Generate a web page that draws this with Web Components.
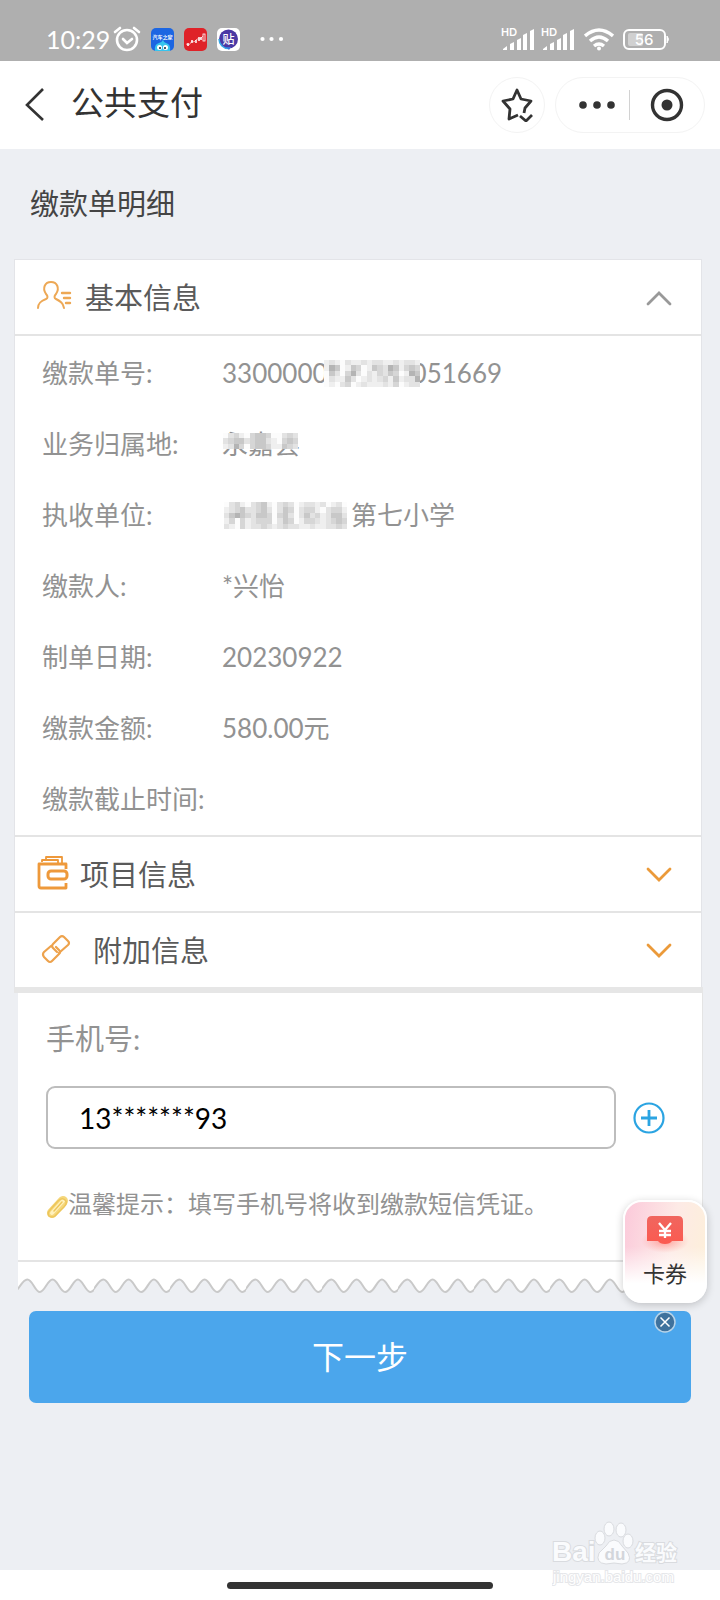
<!DOCTYPE html>
<html lang="zh-CN">
<head>
<meta charset="utf-8">
<meta name="viewport" content="width=device-width, initial-scale=1">
<title>公共支付</title>
<style>
  html, body { margin: 0; }
  body { font-family: Lato, "Noto Sans CJK SC", sans-serif; background: #edeff3; color: #555; }
</style>
</head>
<body>
<pay-app>
  <status-bar slot="top" time="10:29" battery="56"></status-bar>
  <nav-bar slot="top">公共支付</nav-bar>

  <bill-card>
    <info-section icon="person" open>
      <span slot="title">基本信息</span>
      <info-row label="缴款单号:">3300000<pixel-mask overlap="inside" rows="121021121221121221|154014301432541343|042035202132430154|021142012123141225|010230121112130122"></pixel-mask>051669</info-row>
      <info-row label="业务归属地:">永嘉县<pixel-mask overlap="over" rows="02310344300232|23442344210343|12530344311432|"></pixel-mask></info-row>
      <info-row label="执收单位:"><pixel-mask overlap="before" rows="02310234102320122120120|12342234202430233102331|24543244303420242312442|13031233302430133212343|21031223212322112112232"></pixel-mask>第七小学</info-row>
      <info-row label="缴款人:">*兴怡</info-row>
      <info-row label="制单日期:">20230922</info-row>
      <info-row label="缴款金额:">580.00元</info-row>
      <info-row label="缴款截止时间:"></info-row>
    </info-section>
    <info-section icon="wallet"><span slot="title">项目信息</span></info-section>
    <info-section icon="link"><span slot="title">附加信息</span></info-section>
  </bill-card>

  <phone-card value="13*******93">
    <span slot="label">手机号:</span>
    <span slot="tip">温馨提示：填写手机号将收到缴款短信凭证。</span>
  </phone-card>
  <next-button>下一步</next-button>

  <home-indicator slot="bottom"></home-indicator>
  <baidu-mark slot="overlay"></baidu-mark>
  <coupon-float slot="overlay">卡券</coupon-float>
</pay-app>

<script>
const define = (name, html, setup) => {
  const template = document.createElement('template');
  template.innerHTML = html;
  customElements.define(name, class extends HTMLElement {
    constructor() {
      super();
      this.attachShadow({ mode: 'open' }).append(template.content.cloneNode(true));
    }
    connectedCallback() { if (setup) setup(this, this.shadowRoot); }
  });
};

const icons = {
  person: `<svg width="36" height="30" viewBox="0 0 36 30" fill="none" stroke="#eda855" stroke-width="2" stroke-linecap="round">
    <path d="M2 27c0-5 3-7 8-9 2-1 2-3 0-5-4-6-1-12 5-12s9 6 5 12c-2 2-2 4 0 5 4 2 6 3 7 6l1 3"/>
    <path d="M26 12h8M28 17h6M30 22h4" stroke-width="2.400"/></svg>`,
  wallet: `<svg width="32" height="34" viewBox="0 0 32 34" fill="none" stroke="#ee993b" stroke-linejoin="round">
    <path d="M5 6V4h4V1h16v6M9 4h12v3" stroke-width="1.800"/>
    <path d="M29 13V8H2v22q0 2 2 2h25v-5" stroke-width="2.800"/>
    <rect x="11" y="15" width="19" height="8" rx="3" stroke-width="3"/></svg>`,
  link: `<svg width="30" height="30" viewBox="0 0 30 30" fill="none" stroke="#eda24c" stroke-width="2.200" stroke-linecap="round" stroke-linejoin="round">
    <path d="M18 19l1-1 8-7q2-2 0-4l-4-4q-2-2-4 0l-7 7q-2 2 0 4l4 4"/>
    <path d="M10 12l-7 6q-2 2 0 5l4 4q2 2 4 0l7-7q2-2 0-4l-3-3"/></svg>`
};

define('pay-app', `
  <style>
    :host { display: flex; flex-direction: column; min-height: 100vh; position: relative; }
    main { flex: 1; display: flex; flex-direction: column; background: #edeff3; }
    h2 { margin: 0; padding-left: 30px; font-size: 29px; font-weight: 400; line-height: 110px; color: #444; }
  </style>
  <slot name="top"></slot>
  <main><h2>缴款单明细</h2><slot></slot></main>
  <slot name="bottom"></slot>
  <slot name="overlay"></slot>`);

define('status-bar', `
  <style>
    :host { display: flex; align-items: flex-end; justify-content: space-between; height: 61px; box-sizing: border-box;
            padding: 0 50px 9px 46px; background: #afafaf; color: #fff; }
    div { display: flex; align-items: center; height: 26px; }
    .time { font-size: 25px; line-height: 26px; margin-right: 3px; width: 64px; }
    .apps { gap: 10px; margin-left: 10px; }
    .dots { margin-left: 20px; }
    .right { gap: 6px; }
    .wifi { margin: 0 3px; }
  </style>
  <div>
    <span class="time"></span>
    <svg width="28" height="26" viewBox="0 0 28 26" fill="none" stroke="#fff" stroke-width="2.6" stroke-linecap="round">
      <circle cx="14" cy="14" r="10"/><path d="M10 13l4 4 5-4M2 6l5-4M26 6l-5-4"/></svg>
    <div class="apps">
      <svg width="23" height="23" viewBox="0 0 23 23"><rect width="23" height="23" rx="5" fill="#1c66e2"/>
        <text x="11.5" y="11" font-size="5" font-weight="700" fill="#fff" text-anchor="middle" font-family="Noto Sans CJK SC, sans-serif">汽车之家</text>
        <path d="M4 23q-1-7 4-8 2 0 4-3 1 3 3 3 5 1 4 8z" fill="#37c4ee"/><circle cx="8.500" cy="19.500" r="2.500" fill="#fff"/><circle cx="14.500" cy="19.500" r="2.500" fill="#fff"/><circle cx="9" cy="20" r="1" fill="#123"/><circle cx="14" cy="20" r="1" fill="#123"/></svg>
      <svg width="23" height="23" viewBox="0 0 23 23" fill="none" stroke="#fff"><rect width="23" height="23" rx="5" fill="#df2228" stroke="none"/>
        <path d="M2 16l3 1 3-4 2 1 3-3 3 0 3-3" stroke-width=".6"/><path d="M4 15v3M8 12v3M12 12v3M15 9v4M17 9v3" stroke-width="1.500"/><rect x="19" y="6" width="2" height="7" stroke-width=".8"/></svg>
      <svg width="23" height="23" viewBox="0 0 23 23"><rect width="23" height="23" rx="5" fill="#fff"/>
        <circle cx="11.500" cy="11" r="9.500" fill="#4b38a4"/><path d="M2 11a9.500 9.500 0 0 0 9.500 9.500" fill="none" stroke="#35a7e6" stroke-width="1.500"/><path d="M9 19l3 3 2-3z" fill="#3b73d8"/>
        <text x="11.5" y="15.500" font-size="12" font-weight="500" fill="#fff" text-anchor="middle" font-family="Noto Sans CJK SC, sans-serif">贴</text></svg>
    </div>
    <svg class="dots" width="24" height="6" viewBox="0 0 24 6" fill="#fff"><circle cx="2.500" cy="3" r="2.100"/><circle cx="11.500" cy="3" r="2.100"/><circle cx="21" cy="3" r="2.100"/></svg>
  </div>
  <div class="right">
    <svg width="34" height="24" viewBox="0 0 34 24" fill="#fff"><text y="9" font-size="10.5" font-weight="700" font-family="Lato, sans-serif">HD</text>
      <path d="M2 22l4-3v4H2zM9 17l4-2v8H9zM16 13l4-2v12h-4zM22 8l4-2v17h-4zM29 4l4-2v21h-4z"/></svg>
    <svg width="34" height="24" viewBox="0 0 34 24" fill="#fff"><text y="9" font-size="10.5" font-weight="700" font-family="Lato, sans-serif">HD</text>
      <path d="M2 22l4-3v4H2zM9 17l4-2v8H9zM16 13l4-2v12h-4zM22 8l4-2v17h-4zM29 4l4-2v21h-4z"/></svg>
    <svg class="wifi" width="30" height="23" viewBox="0 0 30 23" fill="none" stroke="#fff" stroke-width="3.400"><path d="M1 8q14-12 28 0M6 13q9-8 18 0M10 18q5-4 10 0"/><circle cx="15" cy="20.500" r="2" fill="#fff" stroke="none"/></svg>
    <svg width="47" height="21" viewBox="0 0 47 21"><rect x="5" y="4" width="15" height="13" rx="2" fill="#d0d0d0"/><rect x="1" y="1" width="41" height="19" rx="5" fill="none" stroke="#fff" stroke-width="2"/><path d="M44 7q3 3 0 7z" fill="#fff" stroke="#fff"/>
      <text class="level" x="21" y="16" font-size="15" font-weight="500" fill="#fff" text-anchor="middle" font-family="Inter, sans-serif"></text></svg>
  </div>`,
  (host, root) => {
    root.querySelector('.time').textContent = host.getAttribute('time');
    root.querySelector('.level').textContent = host.getAttribute('battery');
  });

define('nav-bar', `
  <style>
    :host { display: flex; align-items: center; height: 88px; box-sizing: border-box; padding: 0 15px 0 22px; background: #fff; color: #333; }
    button { display: flex; align-items: center; justify-content: center; padding: 0; border: 0; background: none; color: inherit; }
    h1 { flex: 1; margin: 0 0 6px 25px; font-size: 33px; line-height: 44px; font-weight: 400; }
    .star { width: 56px; height: 56px; border: 1px solid #f3f3f3; border-radius: 28px; margin-right: 10px; }
    .pill { display: flex; align-items: center; height: 54px; width: 148px; border: 1px solid #f3f3f3; border-radius: 28px; }
    .more { width: 73px; height: 54px; padding-left: 8px; box-sizing: border-box; }
    .close { flex: 1; height: 54px; }
    i { width: 1px; height: 30px; background: #d2d2d2; }
  </style>
  <button aria-label="返回"><svg width="24" height="34" viewBox="0 0 24 34" fill="none" stroke="currentColor" stroke-width="2.600"><path d="M21 1L5 17l16 15"/></svg></button>
  <h1><slot></slot></h1>
  <button class="star" aria-label="收藏"><svg width="34" height="34" viewBox="0 0 34 34" fill="none" stroke="currentColor" stroke-width="2.800" stroke-linejoin="round">
    <path d="M18 27l-9 4 1-10-7-8 10-2 4-9 4 9 10 2-6 7-1 5"/><path d="M20 28l6 5 6-6"/></svg></button>
  <div class="pill">
    <button class="more" aria-label="更多"><svg width="36" height="8" viewBox="0 0 36 8" fill="currentColor"><circle cx="4" cy="4" r="3.800"/><circle cx="18" cy="4" r="3.800"/><circle cx="32" cy="4" r="3.800"/></svg></button>
    <i></i>
    <button class="close" aria-label="关闭"><svg width="34" height="34" viewBox="0 0 34 34"><circle cx="17" cy="17" r="14.500" fill="none" stroke="currentColor" stroke-width="3.400"/><circle cx="17" cy="17" r="5.500" fill="currentColor"/></svg></button>
  </div>`);

define('bill-card', `
  <style>
    :host { display: block; margin: 0 18px 0 14px; border: 1px solid #e3e4e8; border-bottom: 0; background: #fff; }
  </style>
  <slot></slot>`);

define('info-section', `
  <style>
    :host { display: block; border-bottom: 2px solid #e4e4e4; }
    :host(:last-child) { border-bottom: 0; }
    button { display: flex; align-items: center; width: 100%; height: 74px; padding: 0 29px 3px 21px; border: 0; background: none;
             font: inherit; font-size: 29px; color: #5a5a5a; text-align: left; }
    .icon { display: flex; min-width: 43px; margin-right: 6px; }
    :host([icon="wallet"]) .icon { min-width: 32px; margin-left: 1px; margin-right: 11px; }
    :host([icon="link"]) .icon { margin-left: 5px; margin-right: 9px; }
    .title { flex: 1; }
    .chevron { stroke: #eb9a3a; margin-top: 4px; }
    :host([open]) .chevron { stroke: #999; transform: rotate(180deg); }
    .body { display: none; margin: 0; padding: 2px 27px 0; border-top: 2px solid #e4e4e4; }
    :host([open]) .body { display: block; }
  </style>
  <button><span class="icon"></span><span class="title"><slot name="title"></slot></span>
    <svg class="chevron" width="26" height="16" viewBox="0 0 26 16" fill="none" stroke-width="2.800" stroke-linecap="round"><path d="M2 2l11 11L24 2"/></svg></button>
  <div class="body"><slot></slot></div>`,
  (host, root) => {
    const button = root.querySelector('button');
    root.querySelector('.icon').innerHTML = icons[host.getAttribute('icon')];
    button.setAttribute('aria-expanded', host.hasAttribute('open'));
    button.onclick = () => button.setAttribute('aria-expanded', host.toggleAttribute('open'));
  });

define('info-row', `
  <style>
    :host { display: block; font-size: 26px; line-height: 71px; color: #929292; }
    dl { display: grid; grid-template-columns: 180px 1fr; margin: 0; }
    dd { display: flex; align-items: center; margin: 0; position: relative; }
    dt { white-space: nowrap; }
  </style>
  <dl><dt></dt><dd><slot></slot></dd></dl>`,
  (host, root) => { root.querySelector('dt').textContent = host.getAttribute('label'); });

/* Privacy mask: each digit of "rows" is the grey level of one square cell. */
define('pixel-mask', `
  <style>
    :host { display: inline-flex; position: relative; }
    :host([overlap="inside"]) { margin: 0 -8px 0 -4px; }
    :host([overlap="before"]) { margin: 0 4px 0 2px; }
    :host([overlap="over"]) { position: absolute; left: 1px; top: 24px; }
    svg { display: block; }
  </style>
  <svg shape-rendering="crispEdges"></svg>`,
  (host, root) => {
    const shades = ['#fcfcfc', '#efefef', '#e3e3e3', '#d6d6d6', '#c8c8c8', '#b4b4b4'];
    const rows = host.getAttribute('rows').split('|').filter(Boolean);
    const svg = root.querySelector('svg');
    svg.setAttribute('viewBox', `0 0 ${rows[0].length} ${rows.length}`);
    svg.setAttribute('width', Math.round(rows[0].length * 16 / 3));
    svg.setAttribute('height', Math.round(rows.length * 16 / 3));
    svg.setAttribute('preserveAspectRatio', 'none');
    svg.innerHTML = rows.map((row, y) => [...row].map((level, x) =>
      `<rect x="${x}" y="${y}" width="1" height="1" fill="${shades[level]}"/>`).join('')).join('');
  });

define('phone-card', `
  <style>
    :host { display: block; margin: 0 17px 0 14px; border-top: 6px solid #e6e6e6; padding-left: 4px; }
    .panel { padding: 24px 37px 36px 28px; background: #fff; border-right: 1px solid #e4e4e4; border-bottom: 2px solid #e4e4e4; }
    label { display: block; font-size: 29px; line-height: 44px; color: #929292; }
    .field { display: flex; align-items: center; gap: 17px; margin: 25px 0 35px; }
    input { flex: 1; min-width: 0; height: 63px; box-sizing: border-box; padding: 0 31px; border: 2px solid #bdbdbd; border-radius: 9px;
            background: #fff; font: inherit; font-size: 28px; color: #000; }
    button { display: flex; padding: 0; border: 0; background: none; }
    p { display: flex; align-items: center; margin: 0; font-size: 24px; line-height: 40px; color: #929292; }
    p svg { margin-top: 6px; }
    .edge { display: block; width: 100%; height: 32px; }
  </style>
  <div class="panel">
    <label for="phone"><slot name="label"></slot></label>
    <div class="field"><input id="phone" type="text">
      <button aria-label="添加"><svg width="32" height="32" viewBox="0 0 32 32" fill="none" stroke="#2ba4e2"><circle cx="16" cy="16" r="14.500" stroke-width="2.200"/><path d="M16 8v16M8 16h16" stroke-width="2.800"/></svg></button></div>
    <p><svg width="22" height="24" viewBox="0 0 22 24" fill="none" stroke-linecap="round">
      <path d="M6 18L17 6" stroke="#f5d77c" stroke-width="10"/><path d="M6 18L17 6" stroke="#fff1bd" stroke-width="4"/>
      <path d="M8 16l8-9M4 15l8-9q4-4 7-1 3 3-1 7L9 21q-3 2-6 0-2-3 1-6" stroke="#edc65b" stroke-width="1.500"/></svg><slot name="tip"></slot></p>
  </div>
  <svg class="edge"><defs><pattern id="wave" width="76" height="32" patternUnits="userSpaceOnUse">
    <path d="M-4 -4V30C0 30 4 17.500 9.300 17.500S17 30 21.900 30 29.500 17.500 34.600 17.500 42 30 47.200 30 55 17.500 59.900 17.500 67.500 30 72.600 30 80 17.500 85.200 17.500V-4z" fill="#fff" stroke="#c9c9c9" stroke-width="2"/>
  </pattern></defs><rect width="100%" height="100%" fill="url(#wave)"/></svg>`,
  (host, root) => { root.querySelector('input').value = host.getAttribute('value'); });

define('next-button', `
  <style>
    :host { display: block; margin: 17px 29px 100px; }
    button { display: block; width: 100%; height: 92px; padding: 0 0 4px; border: 0; border-radius: 7px; background: #4ba6ec; color: #fff;
             font: inherit; font-size: 32px; }
  </style>
  <button><slot></slot></button>`);

define('coupon-float', `
  <style>
    :host { position: absolute; right: 13px; top: 1200px; display: flex; flex-direction: column; align-items: center; gap: 8px; }
    .card { display: flex; flex-direction: column; align-items: center; gap: 2px; width: 84px; height: 103px; box-sizing: border-box; padding: 12px 0 0;
            border: 2px solid #fff; border-radius: 19px; box-shadow: 0 2px 8px #0003;
            background: linear-gradient(180deg, #fff0 45%, #fff 82%), linear-gradient(100deg, #fbc9da, #fdeae6 55%, #fdf0d8);
            font: inherit; font-size: 22px; line-height: 36px; color: #333; }
    .close { display: flex; padding: 0; border: 0; background: none; }
  </style>
  <button class="card"><svg width="48" height="40" viewBox="0 0 48 40">
    <defs><linearGradient id="red" x2="0" y2="1"><stop stop-color="#f0665f"/><stop offset="1" stop-color="#fb5a50"/></linearGradient>
    <radialGradient id="glow"><stop stop-color="#ff7b74" stop-opacity=".7"/><stop offset="1" stop-color="#ff9b94" stop-opacity="0"/></radialGradient></defs>
    <ellipse cx="24" cy="27" rx="24" ry="12" fill="url(#glow)"/>
    <path d="M6 27V7q0-5 5-5h26q5 0 5 5v20H31q-2 3-7 3t-7-3z" fill="url(#red)"/>
    <path d="M18 9l6 7 6-7M18 17h12M18 21h12M24 16v8" fill="none" stroke="#fff" stroke-width="2.300"/></svg><slot></slot></button>
  <button class="close" aria-label="关闭"><svg width="22" height="22" viewBox="0 0 22 22" fill="none"><circle cx="11" cy="11" r="10" fill="#3f729d" stroke="#b9d4e8" stroke-width="1.500"/><path d="M6.500 6.500l9 9M15.500 6.500l-9 9" stroke="#fff" stroke-width="1.500"/></svg></button>`);

define('baidu-mark', `
  <style>
    :host { position: absolute; right: 39px; bottom: 14px; width: 129px; }
    svg { display: block; }
    text { paint-order: stroke; stroke: #d9dbdf; stroke-width: 2px; fill: #fafbfd; font-family: "Liberation Sans", "Noto Sans CJK SC", sans-serif; font-weight: 700; }
    .du { fill: #d3d6db; stroke: none; }
    .cn { font-family: "Noto Sans CJK SC", sans-serif; }
    .url { fill: #fff; stroke: #e6e7ea; font-weight: 400; }
  </style>
  <svg width="129" height="66" viewBox="0 0 129 66">
    <text x="0" y="41" font-size="28">Bai</text>
    <g fill="#fafbfd" stroke="#d9dbdf"><ellipse cx="48" cy="18" rx="5" ry="7"/><ellipse cx="57" cy="9" rx="5" ry="7"/><ellipse cx="69" cy="10" rx="5" ry="7"/><ellipse cx="76" cy="21" rx="5" ry="7"/>
      <path d="M62 20q5 0 8 6l6 7q5 10-6 11-8-2-16 0-11-1-7-11l7-7q3-6 8-6z"/></g>
    <text class="du" x="63" y="40" font-size="17" text-anchor="middle">du</text>
    <text class="cn" x="83" y="40" font-size="21">经验</text>
    <text class="url" x="1" y="62" font-size="15">jingyan.baidu.com</text>
  </svg>`);

define('home-indicator', `
  <style>
    :host { display: flex; justify-content: center; height: 30px; background: #fff; }
    i { width: 266px; height: 7px; margin-top: 12px; border-radius: 4px; background: #333; }
  </style>
  <i></i>`);
</script>
</body>
</html>
